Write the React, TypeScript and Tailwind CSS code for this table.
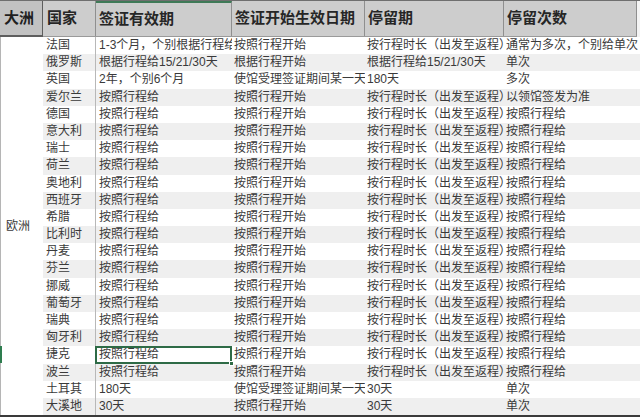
import React from "react";

type Row = {
  country: string;
  validity: string;
  start: string;
  stay: string;
  times: string;
};

const rows: Row[] = [
  { country: "法国", validity: "1-3个月，个别根据行程给", start: "按照行程开始", stay: "按行程时长（出发至返程）", times: "通常为多次，个别给单次" },
  { country: "俄罗斯", validity: "根据行程给15/21/30天", start: "根据行程开始", stay: "根据行程给15/21/30天", times: "单次" },
  { country: "英国", validity: "2年，个别6个月", start: "使馆受理签证期间某一天", stay: "180天", times: "多次" },
  { country: "爱尔兰", validity: "按照行程给", start: "按照行程开始", stay: "按行程时长（出发至返程）", times: "以领馆签发为准" },
  { country: "德国", validity: "按照行程给", start: "按照行程开始", stay: "按行程时长（出发至返程）", times: "按照行程给" },
  { country: "意大利", validity: "按照行程给", start: "按照行程开始", stay: "按行程时长（出发至返程）", times: "按照行程给" },
  { country: "瑞士", validity: "按照行程给", start: "按照行程开始", stay: "按行程时长（出发至返程）", times: "按照行程给" },
  { country: "荷兰", validity: "按照行程给", start: "按照行程开始", stay: "按行程时长（出发至返程）", times: "按照行程给" },
  { country: "奥地利", validity: "按照行程给", start: "按照行程开始", stay: "按行程时长（出发至返程）", times: "按照行程给" },
  { country: "西班牙", validity: "按照行程给", start: "按照行程开始", stay: "按行程时长（出发至返程）", times: "按照行程给" },
  { country: "希腊", validity: "按照行程给", start: "按照行程开始", stay: "按行程时长（出发至返程）", times: "按照行程给" },
  { country: "比利时", validity: "按照行程给", start: "按照行程开始", stay: "按行程时长（出发至返程）", times: "按照行程给" },
  { country: "丹麦", validity: "按照行程给", start: "按照行程开始", stay: "按行程时长（出发至返程）", times: "按照行程给" },
  { country: "芬兰", validity: "按照行程给", start: "按照行程开始", stay: "按行程时长（出发至返程）", times: "按照行程给" },
  { country: "挪威", validity: "按照行程给", start: "按照行程开始", stay: "按行程时长（出发至返程）", times: "按照行程给" },
  { country: "葡萄牙", validity: "按照行程给", start: "按照行程开始", stay: "按行程时长（出发至返程）", times: "按照行程给" },
  { country: "瑞典", validity: "按照行程给", start: "按照行程开始", stay: "按行程时长（出发至返程）", times: "按照行程给" },
  { country: "匈牙利", validity: "按照行程给", start: "按照行程开始", stay: "按行程时长（出发至返程）", times: "按照行程给" },
  { country: "捷克", validity: "按照行程给", start: "按照行程开始", stay: "按行程时长（出发至返程）", times: "按照行程给" },
  { country: "波兰", validity: "按照行程给", start: "按照行程开始", stay: "按行程时长（出发至返程）", times: "按照行程给" },
  { country: "土耳其", validity: "180天", start: "使馆受理签证期间某一天", stay: "30天", times: "单次" },
  { country: "大溪地", validity: "30天", start: "按照行程开始", stay: "30天", times: "单次" },
];

const font = { fontFamily: '"Liberation Sans", "Noto Sans CJK SC", sans-serif' };

function HeaderCell({ label, className }: { label: string; className: string }) {
  return (
    <div className={`flex h-full items-center border-r border-[#8f8f8f] pl-[3px] text-[15px] font-bold text-[#262626] ${className}`}>
      {label}
    </div>
  );
}

export default function App() {
  return (
    <div className="h-[418px] w-[640px] overflow-hidden bg-white" style={font}>
      <div className="flex h-[37px] border-t border-[#6f6f6f] bg-white">
        <div className="flex h-full w-[43px] shrink-0 items-center border-r border-b-2 border-[#5e5e5e] bg-[#c2c2c2] pl-[4px] text-[15px] font-bold text-[#1f1f1f]">
          大洲
        </div>
        <div className="flex w-[594px] shrink-0 border-b border-[#9a9a9a] bg-[#cdcdcd]">
          <HeaderCell label="国家" className="w-[53px] pl-[4px]" />
          <HeaderCell label="签证有效期" className="w-[136px] border-t-2 border-t-[#3f7a57]" />
          <HeaderCell label="签证开始生效日期" className="w-[133px]" />
          <HeaderCell label="停留期" className="w-[139px]" />
          <HeaderCell label="停留次数" className="w-[133px]" />
        </div>
        <div className="flex-1 bg-[#f4f4f4]" />
      </div>

      <div className="flex border-b-2 border-[#3a3a3a]">
        <div className="relative flex w-[43px] shrink-0 items-center border-l border-[#b5b5b5] pl-[5px] text-[12px] text-[#3a3a3a]">
          欧洲
          <div className="absolute left-[-1px] top-[309px] h-[17px] w-[2px] bg-[#2e7d4f]" />
        </div>
        <div className="flex-1">
          {rows.map((r, i) => (
            <div
              key={r.country}
              className={`flex h-[17.2px] items-center text-[12px] leading-none text-[#3a3a3a] ${i % 2 === 1 ? "bg-[#efefef]" : "bg-white"}`}
            >
              <div className="w-[53px] shrink-0 overflow-hidden whitespace-nowrap border-r border-[#b8b8b8] pl-[3px] leading-[17.2px]">
                {r.country}
              </div>
              <div className="relative h-full w-[136px] shrink-0 overflow-visible">
                <div className="h-full overflow-hidden whitespace-nowrap pl-[3px] leading-[17.2px]">{r.validity}</div>
                {r.country === "捷克" && (
                  <div className="absolute left-[-1px] top-0 h-full w-[137px] border-2 border-[#2e6b46]">
                    <div className="absolute -bottom-[4px] -right-[4px] h-[5px] w-[5px] border border-white bg-[#2e6b46]" />
                  </div>
                )}
              </div>
              <div className="w-[133px] shrink-0 overflow-hidden whitespace-nowrap pl-[2px] leading-[17.2px]">{r.start}</div>
              <div className="w-[139px] shrink-0 overflow-hidden whitespace-nowrap pl-[2px] leading-[17.2px]">{r.stay}</div>
              <div className="flex-1 overflow-hidden whitespace-nowrap pl-[2px] leading-[17.2px]">{r.times}</div>
            </div>
          ))}
        </div>
      </div>
    </div>
  );
}
